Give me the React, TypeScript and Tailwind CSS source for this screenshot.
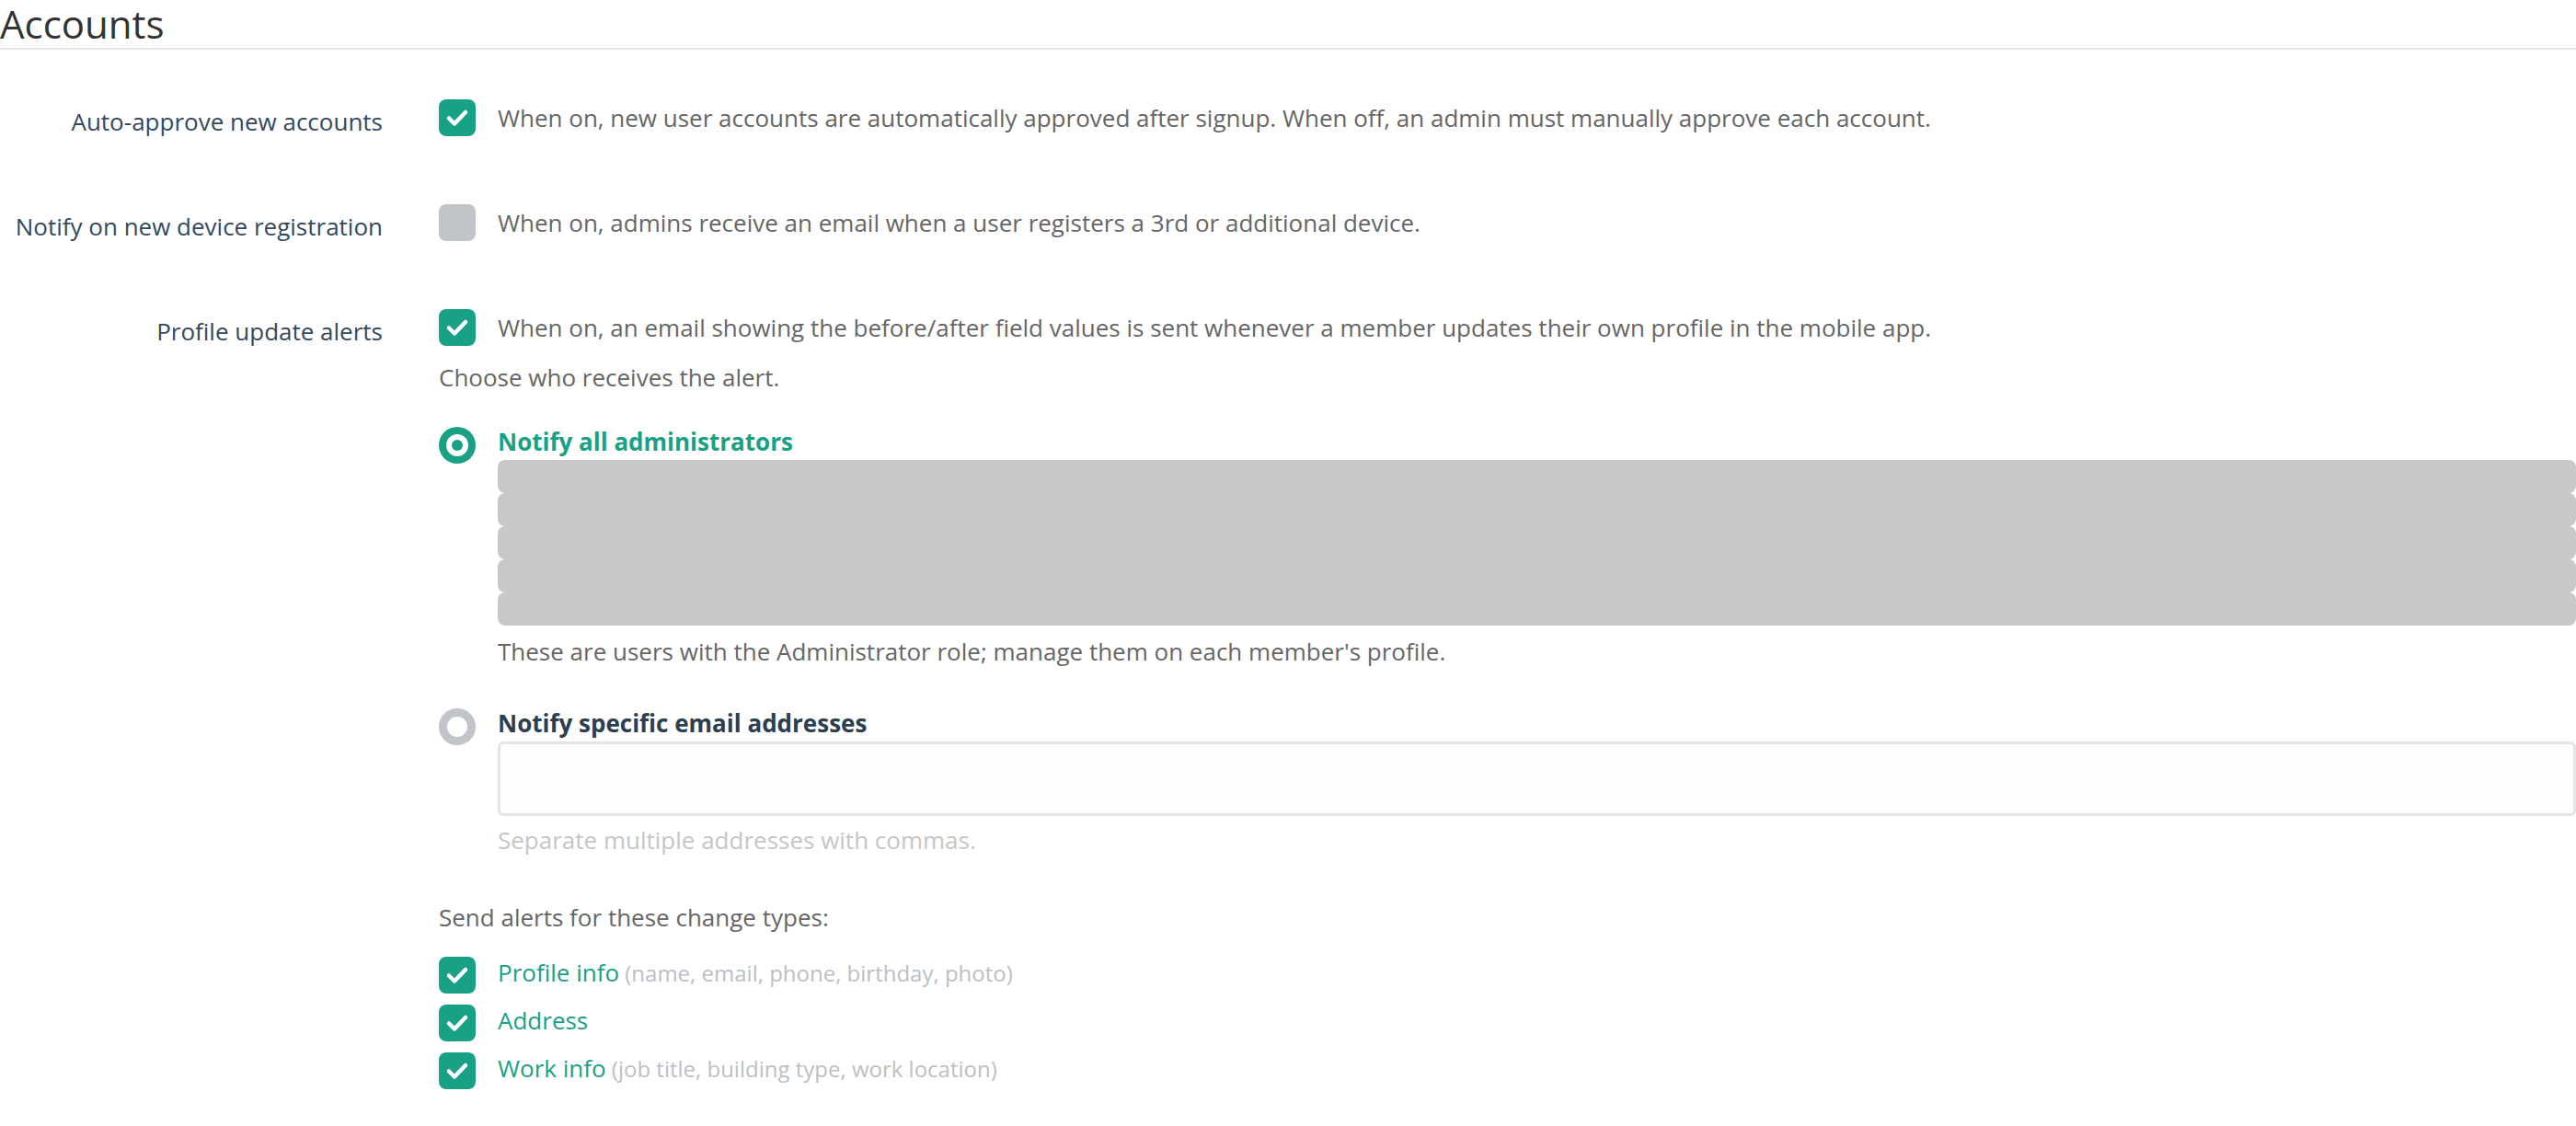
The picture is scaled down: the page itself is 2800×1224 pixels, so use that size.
import React from 'react'

const TEAL = 'bg-[#19a185]'

function Check({ on = true, className = '' }: { on?: boolean; className?: string }) {
  return (
    <div
      className={`w-10 h-10 shrink-0 rounded-lg flex items-center justify-center ${
        on ? TEAL : 'bg-[#c1c5c9]'
      } ${className}`}
    >
      {on && (
        <svg width="40" height="40" viewBox="0 0 40 40" fill="none">
          <path
            d="M11 20.5l6 6 12-12.5"
            stroke="white"
            strokeWidth="4.5"
            strokeLinecap="round"
            strokeLinejoin="round"
          />
        </svg>
      )}
    </div>
  )
}

function SettingRow({
  label,
  checked,
  description,
  children,
}: {
  label: string
  checked: boolean
  description: string
  children?: React.ReactNode
}) {
  return (
    <>
      <div className="text-right text-[26px] leading-[40px] pt-1 text-[#34495e] whitespace-nowrap">
        {label}
      </div>
      <div>
        <div className="flex items-start gap-6">
          <Check on={checked} />
          <p className="text-[26px] leading-[40px] text-[#666] whitespace-nowrap">{description}</p>
        </div>
        {children}
      </div>
    </>
  )
}

const changeTypes = [
  { name: 'Profile info', hint: '(name, email, phone, birthday, photo)' },
  { name: 'Address', hint: '' },
  { name: 'Work info', hint: '(job title, building type, work location)' },
]

export default function App() {
  return (
    <div className="min-h-screen bg-white font-['Open_Sans',sans-serif] text-[#666]">
      <h1 className="text-[42px] leading-[52px] text-[#333] border-b-2 border-[#e6e6e6]">Accounts</h1>

      <div className="pt-[54px] grid grid-cols-[416px_1fr] gap-x-[61px] gap-y-[70px]">
        <SettingRow
          label="Auto-approve new accounts"
          checked
          description="When on, new user accounts are automatically approved after signup. When off, an admin must manually approve each account."
        />
        <SettingRow
          label="Notify on new device registration"
          checked={false}
          description="When on, admins receive an email when a user registers a 3rd or additional device."
        />
        <SettingRow
          label="Profile update alerts"
          checked
          description="When on, an email showing the before/after field values is sent whenever a member updates their own profile in the mobile app."
        >
          <p className="mt-[14px] text-[26px] leading-[40px] text-[#666]">Choose who receives the alert.</p>

          {/* Option: all admins */}
          <div className="mt-[30px] flex items-start gap-6">
            <div className={`mt-1 w-10 h-10 shrink-0 rounded-full ${TEAL} flex items-center justify-center`}>
              <div className="w-6 h-6 rounded-full bg-white flex items-center justify-center">
                <div className={`w-3 h-3 rounded-full ${TEAL}`} />
              </div>
            </div>
            <div className="flex-1">
              <p className="text-[26px] leading-[40px] font-bold text-[#19a185]">Notify all administrators</p>
              <div className="flex flex-col">
                {Array.from({ length: 5 }).map((_, i) => (
                  <div key={i} className="h-9 rounded-lg bg-[#c8c8c8]" />
                ))}
              </div>
              <p className="mt-2 text-[26px] leading-[40px] text-[#666]">
                These are users with the Administrator role; manage them on each member's profile.
              </p>
            </div>
          </div>

          {/* Option: specific emails */}
          <div className="mt-[38px] flex items-start gap-6">
            <div className="mt-1 w-10 h-10 shrink-0 rounded-full border-[9px] border-[#c1c5c9] bg-white" />
            <div className="flex-1">
              <p className="text-[26px] leading-[40px] font-bold text-[#2c3e50]">Notify specific email addresses</p>
              <input
                type="text"
                className="block w-full h-[81px] rounded-md border-[3px] border-[#e4e5e7] bg-[#fdfdfd] outline-none"
              />
              <p className="mt-[6px] text-[26px] leading-[40px] text-[#c6c6c6]">
                Separate multiple addresses with commas.
              </p>
            </div>
          </div>

          <p className="mt-[44px] text-[26px] leading-[40px] text-[#666]">Send alerts for these change types:</p>

          <div className="mt-5 flex flex-col gap-[9px]">
            {changeTypes.map((t) => (
              <div key={t.name} className="flex items-start gap-6 h-[43px]">
                <Check className="mt-[3px]" />
                <p className="text-[26px] leading-[40px] text-[#19a185] whitespace-nowrap">
                  {t.name}
                  {t.hint && <span className="text-[24px] leading-[40px] text-[#bcc0c4]"> {t.hint}</span>}
                </p>
              </div>
            ))}
          </div>
        </SettingRow>
      </div>
    </div>
  )
}
